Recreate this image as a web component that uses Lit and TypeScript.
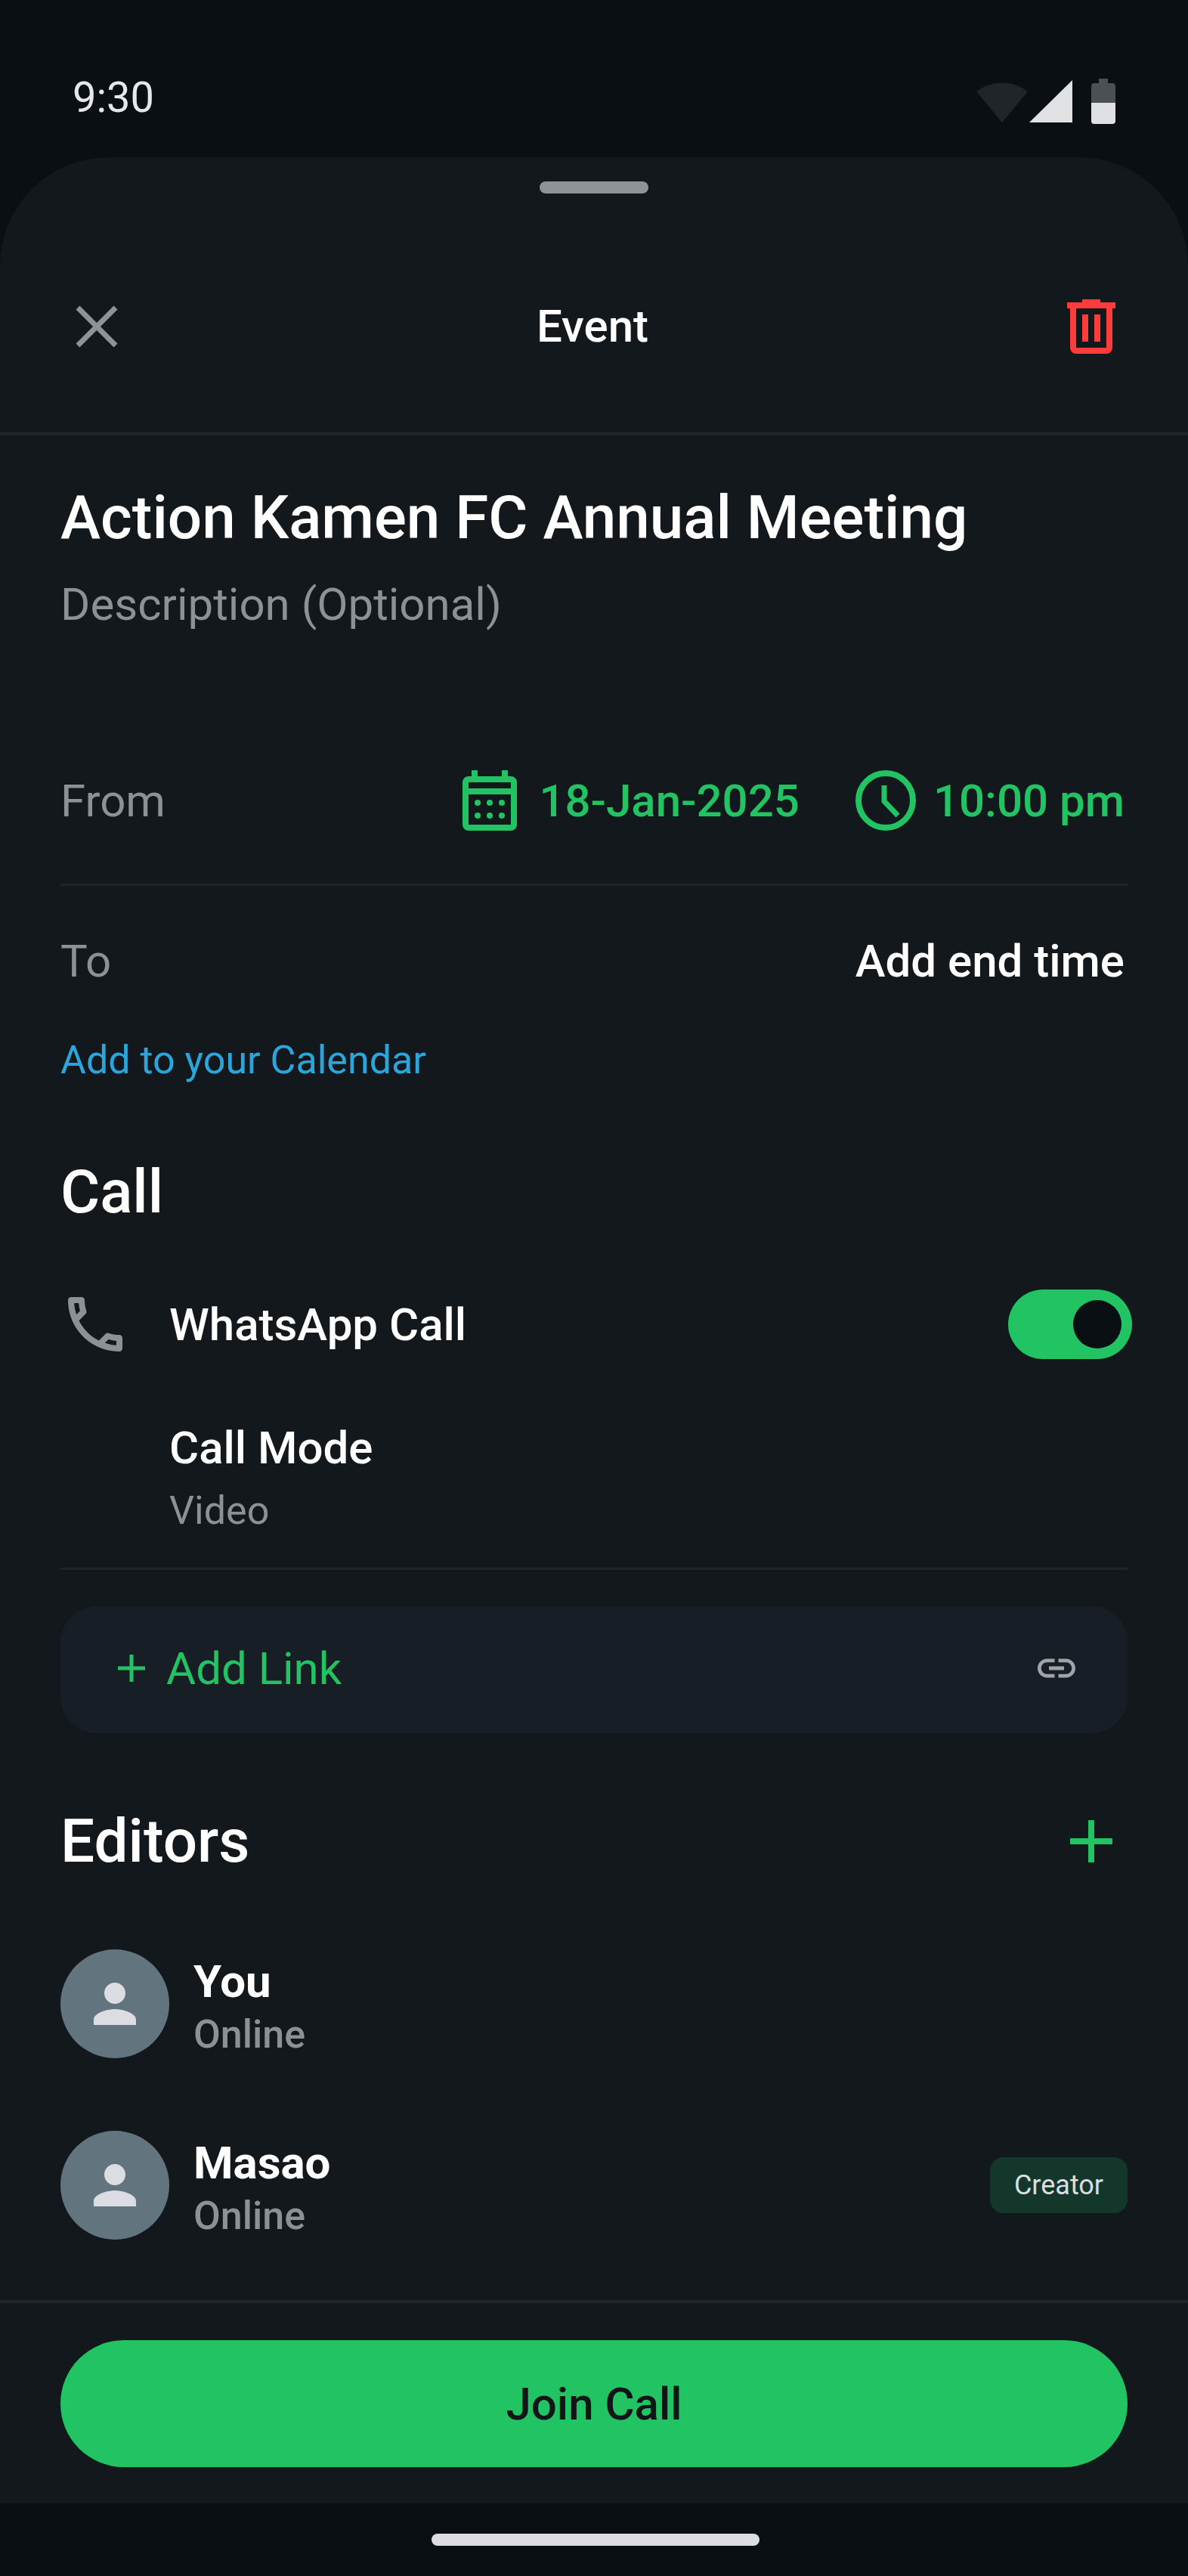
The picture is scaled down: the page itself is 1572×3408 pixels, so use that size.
import { LitElement, html, css, svg } from "lit";
import { customElement } from "lit/decorators.js";

const PHONE =
	"M6.54 5c.06.89.21 1.76.45 2.59l-1.2 1.2c-.41-1.2-.67-2.47-.76-3.79h1.51m9.86 12.02c.85.24 1.72.39 2.6.45v1.49c-1.32-.09-2.59-.35-3.8-.75l1.2-1.19M7.5 3H4c-.55 0-1 .45-1 1 0 9.39 7.61 17 17 17 .55 0 1-.45 1-1v-3.49c0-.55-.45-1-1-1-1.24 0-2.45-.2-3.57-.57-.1-.04-.21-.05-.31-.05-.26 0-.51.1-.71.29l-2.2 2.2c-2.83-1.45-5.15-3.76-6.59-6.59l2.2-2.2c.28-.28.36-.67.25-1.02C8.7 6.45 8.5 5.25 8.5 4c0-.55-.45-1-1-1z";
const LINK =
	"M3.9 12c0-1.71 1.39-3.1 3.1-3.1h4V7H7c-2.76 0-5 2.24-5 5s2.24 5 5 5h4v-1.9H7c-1.71 0-3.1-1.39-3.1-3.1zM8 13h8v-2H8v2zm9-6h-4v1.9h4c1.71 0 3.1 1.39 3.1 3.1s-1.39 3.1-3.1 3.1h-4V17h4c2.76 0 5-2.24 5-5s-2.24-5-5-5z";
const PERSON =
	"M12 12c2.21 0 4-1.79 4-4s-1.79-4-4-4-4 1.79-4 4 1.79 4 4 4zm0 2c-2.67 0-8 1.34-8 4v2h16v-2c0-2.66-5.33-4-8-4z";

const editors = [
	{ name: "You", status: "Online", creator: false },
	{ name: "Masao", status: "Online", creator: true },
];

@customElement("app-root")
export class AppRoot extends LitElement {
	static styles = css`
		:host {
			display: block;
			--green: #22c363;
			--muted: #8b9195;
			--line: #1f262a;
			--sheet: #12181c;
			width: 1572px;
			height: 3408px;
			background: #0a0f13;
			font-family: Roboto, "Liberation Sans", sans-serif;
			color: #fff;
		}
		.page {
			display: flex;
			flex-direction: column;
			height: 3408px;
		}
		.status {
			height: 208px;
			flex: none;
			display: flex;
			align-items: flex-start;
			justify-content: space-between;
			box-sizing: border-box;
			padding: 104px 96px 0 96px;
		}
		.time {
			font-size: 56px;
			line-height: 50px;
			color: #e6e7e9;
		}
		.status-icons {
			display: block;
			width: 184px;
			height: 60px;
		}
		.sheet {
			flex: 1;
			display: flex;
			flex-direction: column;
			background: var(--sheet);
			border-radius: 144px 144px 0 0;
		}
		.handle {
			width: 144px;
			height: 16px;
			border-radius: 8px;
			background: #8e9396;
			margin: 32px auto 0;
		}
		.header {
			height: 320px;
			flex: none;
			display: flex;
			align-items: center;
			justify-content: space-between;
			box-sizing: border-box;
			padding: 36px 96px 0 100px;
			border-bottom: 4px solid var(--line);
		}
		.header h1 {
			margin: 0;
			font-size: 60px;
			line-height: 70px;
			font-weight: 500;
		}
		.close {
			width: 56px;
			height: 56px;
			display: block;
		}
		.trash {
			width: 64px;
			height: 72px;
			display: block;
		}
		.content {
			flex: 1;
			padding: 0 80px;
		}
		.title {
			margin: 64px 0 0;
			font-size: 80px;
			line-height: 90px;
			font-weight: 500;
		}
		.desc {
			margin-top: 30px;
			font-size: 60px;
			line-height: 80px;
			color: var(--muted);
		}
		.row {
			display: flex;
			align-items: center;
			justify-content: space-between;
			font-size: 60px;
		}
		.from {
			height: 220px;
			margin-top: 109px;
			border-bottom: 3px solid var(--line);
		}
		.to {
			height: 199px;
		}
		.label {
			color: var(--muted);
		}
		.when {
			display: flex;
			align-items: center;
			color: var(--green);
			font-weight: 500;
			padding-right: 4px;
		}
		.when svg {
			display: block;
			flex: none;
		}
		.cal {
			width: 72px;
			height: 80px;
			margin-right: 29px;
		}
		.clock {
			width: 80px;
			height: 80px;
			margin: 0 23px 0 74px;
		}
		.end {
			font-weight: 500;
			padding-right: 4px;
		}
		.add-cal {
			font-size: 52px;
			line-height: 64px;
			color: #2ba6dc;
		}
		h2 {
			margin: 0;
			font-size: 80px;
			line-height: 90px;
			font-weight: 500;
		}
		.call-head {
			margin-top: 97px;
		}
		.wa {
			height: 96px;
			margin-top: 82px;
		}
		.wa-left {
			display: flex;
			align-items: center;
			gap: 50px;
			font-weight: 500;
		}
		.wa-left svg {
			width: 96px;
			height: 96px;
			display: block;
			margin-left: -2px;
			fill: var(--muted);
		}
		.toggle {
			width: 164px;
			height: 92px;
			border-radius: 46px;
			background: var(--green);
			display: flex;
			align-items: center;
			justify-content: flex-end;
			box-sizing: border-box;
			padding-right: 14px;
			margin-right: -6px;
		}
		.knob {
			width: 64px;
			height: 64px;
			border-radius: 50%;
			background: #0a0f13;
		}
		.mode {
			margin-left: 144px;
		}
		.mode-title {
			margin-top: 81px;
			font-size: 60px;
			line-height: 70px;
			font-weight: 500;
		}
		.mode-sub {
			margin-top: 16px;
			font-size: 52px;
			line-height: 64px;
			color: var(--muted);
		}
		.divider {
			height: 3px;
			margin-top: 43px;
			background: var(--line);
		}
		.link-card {
			height: 168px;
			margin-top: 48px;
			border-radius: 48px;
			background: #181e26;
			box-sizing: border-box;
			padding: 0 64px 4px 76px;
			color: var(--green);
		}
		.link-left {
			display: flex;
			align-items: center;
			gap: 28px;
		}
		.plus-sm {
			width: 36px;
			height: 36px;
			display: block;
		}
		.link-card .link {
			width: 60px;
			height: 60px;
			display: block;
			fill: #a0a4a8;
		}
		.editors-head {
			margin-top: 98px;
		}
		.plus-lg {
			width: 56px;
			height: 56px;
			display: block;
			margin-right: 20px;
		}
		.editors {
			display: flex;
			flex-direction: column;
			gap: 96px;
			margin-top: 98px;
		}
		.editor {
			display: flex;
			align-items: center;
			justify-content: space-between;
			height: 144px;
		}
		.editor-left {
			display: flex;
			align-items: center;
			gap: 32px;
		}
		.avatar {
			width: 144px;
			height: 144px;
			border-radius: 50%;
			background: #62757f;
			display: flex;
			align-items: center;
			justify-content: center;
		}
		.avatar svg {
			width: 84px;
			height: 84px;
			display: block;
			fill: #dcdde2;
		}
		.who {
			padding-top: 7px;
		}
		.name {
			font-size: 60px;
			line-height: 70px;
			font-weight: 700;
		}
		.online {
			margin-top: 5px;
			font-size: 52px;
			line-height: 60px;
			font-weight: 500;
			color: var(--muted);
		}
		.badge {
			height: 74px;
			width: 182px;
			border-radius: 18px;
			background: #14372c;
			color: #dcdde0;
			font-size: 36px;
			display: flex;
			align-items: center;
			justify-content: center;
		}
		.footer {
			height: 269px;
			flex: none;
			box-sizing: border-box;
			border-top: 4px solid var(--line);
			padding: 49px 80px 0;
		}
		.join {
			height: 168px;
			border-radius: 84px;
			background: var(--green);
			color: #111518;
			font-size: 60px;
			font-weight: 500;
			display: flex;
			align-items: center;
			justify-content: center;
		}
		.nav {
			height: 96px;
			flex: none;
			box-sizing: border-box;
			padding-top: 40px;
		}
		.home {
			width: 434px;
			height: 16px;
			border-radius: 8px;
			background: #dcdde0;
			margin-left: 571px;
		}
	`;

	renderPerson() {
		return html`<svg viewBox="0 0 24 24"><path d=${PERSON}></path></svg>`;
	}

	renderPlus(cls: string, size: number, width: number) {
		const m = size / 2;
		return html`<svg class=${cls} viewBox="0 0 ${size} ${size}">
			<path
				d="M${m} 0V${size}M0 ${m}H${size}"
				stroke="#22c363"
				stroke-width=${width}
				fill="none"
			></path>
		</svg>`;
	}

	renderStatusIcons() {
		return html`<svg class="status-icons" viewBox="0 0 184 60">
			<path d="M0 17A56 56 0 0 1 68 17L34 58Z" fill="#1f2528"></path>
			<path d="M127 2V58H70Z" fill="#e0e1e3"></path>
			${svg`<rect x="162" y="0" width="12" height="8" fill="#4b5054"></rect>
			<path d="M152 10a4 4 0 0 1 4-4h24a4 4 0 0 1 4 4V32H152Z" fill="#4b5054"></path>
			<path d="M152 32H184V56a4 4 0 0 1-4 4H156a4 4 0 0 1-4-4Z" fill="#dfe0e3"></path>`}
		</svg>`;
	}

	render() {
		return html`
			<div class="page">
				<div class="status">
					<span class="time">9:30</span>
					${this.renderStatusIcons()}
				</div>
				<div class="sheet">
					<div class="handle"></div>
					<div class="header">
						<svg class="close" viewBox="0 0 56 56">
							<path d="M3 3L53 53M53 3L3 53" stroke="#8e9396" stroke-width="7" fill="none"></path>
						</svg>
						<h1>Event</h1>
						<svg class="trash" viewBox="0 0 64 72">
							<path
								d="M20 0H44V4H64V12H60V64a8 8 0 0 1-8 8H12a8 8 0 0 1-8-8V12H0V4H20ZM12 12V64H52V12ZM20 20H28V56H20ZM36 20H44V56H36Z"
								fill="#ff3b3b"
								fill-rule="evenodd"
							></path>
						</svg>
					</div>
					<div class="content">
						<p class="title">Action Kamen FC Annual Meeting</p>
						<div class="desc">Description (Optional)</div>
						<div class="row from">
							<span class="label">From</span>
							<span class="when">
								<svg class="cal" viewBox="0 0 72 80">
									<path
										d="M12 0H20V8H52V0H60V8H64a8 8 0 0 1 8 8V72a8 8 0 0 1-8 8H8a8 8 0 0 1-8-8V16a8 8 0 0 1 8-8H12ZM8 16V24H64V16ZM8 32V72H64V32Z"
										fill="#22c363"
										fill-rule="evenodd"
									></path>
									<g fill="#22c363">
										<ellipse cx="20" cy="43" rx="4" ry="4"></ellipse>
										<ellipse cx="36" cy="43" rx="4" ry="4"></ellipse>
										<ellipse cx="52" cy="43" rx="4" ry="4"></ellipse>
										<ellipse cx="20" cy="60" rx="4" ry="4"></ellipse>
										<ellipse cx="36" cy="60" rx="4" ry="4"></ellipse>
										<ellipse cx="52" cy="60" rx="4" ry="4"></ellipse>
									</g>
								</svg>
								18-Jan-2025
								<svg class="clock" viewBox="0 0 80 80">
									<circle cx="40" cy="40" r="36" stroke="#22c363" stroke-width="8" fill="none"></circle>
									<path d="M38 20V41L56 60" stroke="#22c363" stroke-width="7" fill="none"></path>
								</svg>
								10:00 pm
							</span>
						</div>
						<div class="row to">
							<span class="label">To</span>
							<span class="end">Add end time</span>
						</div>
						<div class="add-cal">Add to your Calendar</div>
						<h2 class="call-head">Call</h2>
						<div class="row wa">
							<div class="wa-left">
								<svg viewBox="0 0 24 24"><path d=${PHONE}></path></svg>
								WhatsApp Call
							</div>
							<div class="toggle"><div class="knob"></div></div>
						</div>
						<div class="mode">
							<div class="mode-title">Call Mode</div>
							<div class="mode-sub">Video</div>
						</div>
						<div class="divider"></div>
						<div class="row link-card">
							<div class="link-left">
								${this.renderPlus("plus-sm", 36, 5)}
								Add Link
							</div>
							<svg class="link" viewBox="0 0 24 24"><path d=${LINK}></path></svg>
						</div>
						<div class="row editors-head">
							<h2>Editors</h2>
							${this.renderPlus("plus-lg", 56, 8)}
						</div>
						<div class="editors">
							${editors.map(
								(e) => html`
									<div class="editor">
										<div class="editor-left">
											<div class="avatar">${this.renderPerson()}</div>
											<div class="who">
												<div class="name">${e.name}</div>
												<div class="online">${e.status}</div>
											</div>
										</div>
										${e.creator ? html`<div class="badge">Creator</div>` : ""}
									</div>
								`
							)}
						</div>
					</div>
					<div class="footer"><div class="join">Join Call</div></div>
				</div>
				<div class="nav"><div class="home"></div></div>
			</div>
		`;
	}
}
